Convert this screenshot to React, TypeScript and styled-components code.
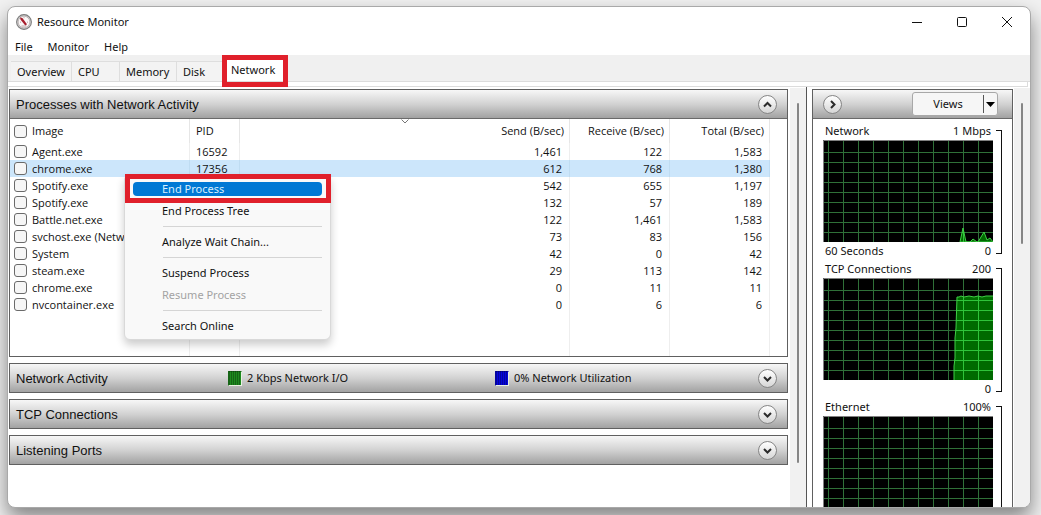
import React from "react";
import styled, { createGlobalStyle, css } from "styled-components";

const GlobalStyle = createGlobalStyle`
  * { box-sizing: border-box; }
  html, body { margin: 0; padding: 0; }
  body {
    background: #f1f1f1;
    color: #111;
    font-family: "Noto Sans", "Open Sans", sans-serif;
    font-size: 11px;
    line-height: 16px;
  }
  button, input { font: inherit; color: inherit; margin: 0; }
  button { padding: 0; border: 0; background: none; }
`;

const Desktop = styled.div`
  height: 100vh;
  min-height: 320px;
  padding: 6px 10px 7px 7px;
  overflow: hidden;
`;

const Window = styled.main`
  display: flex;
  flex-direction: column;
  height: 100%;
  overflow: hidden;
  background: #fff;
  border: 1px solid #a9a9a9;
  border-radius: 8px;
  box-shadow: 0 10px 20px rgba(0, 0, 0, 0.46);
`;

const TitleBar = styled.header`
  display: flex;
  flex: none;
  align-items: center;
  height: 32px;
  padding: 0 17px 2px 8px;
`;

const Title = styled.h1`
  flex: 1;
  margin: 0 0 0 5px;
  font-size: 11px;
  font-weight: 400;
`;

const Caption = styled.div`
  display: flex;
  gap: 33px;
`;

const CaptionButton = styled.button`
  display: flex;
  svg { display: block; }
`;

const MenuBar = styled.nav`
  display: flex;
  flex: none;
  gap: 15px;
  height: 16px;
  padding: 0 7px;
`;

const TabStrip = styled.div`
  display: flex;
  flex: none;
  align-items: flex-end;
  height: 27px;
  padding-left: 3px;
  background: #f0f0f0;
  border-bottom: 1px solid #dcdcdc;
`;

const Tab = styled.button<{ $width: number; $active?: boolean }>`
  position: relative;
  width: ${(p) => p.$width}px;
  height: 20px;
  padding-left: 6px;
  text-align: left;
  background: #f3f3f3;
  border: 1px solid #dedede;
  border-width: 1px 1px 0 0;
  ${(p) =>
    p.$active &&
    css`
      height: 24px;
      padding-left: 8px;
      background: #fff;
      border-color: #fff;
    `}
`;

const Highlight = styled.span<{ $inset: string }>`
  position: absolute;
  inset: ${(p) => p.$inset};
  z-index: 2;
  border: 5px solid #e0202b;
  pointer-events: none;
`;

const PageEdge = styled.div`
  flex: none;
  height: 5px;
  margin-right: 2px;
  border: 1px solid #dcdcdc;
  border-width: 0 1px 1px 0;
`;

const Content = styled.div`
  display: flex;
  flex: 1;
  min-height: 0;
`;

const Sections = styled.div`
  display: flex;
  flex: 1;
  flex-direction: column;
  gap: 6px;
  min-width: 0;
  padding: 2px 2px 0 1px;
`;

const Section = styled.section`
  position: relative;
  flex: none;
  border: 1px solid #606060;
`;

const Bar = styled.div`
  display: flex;
  align-items: center;
  height: 28px;
  padding: 0 10px 0 6px;
  background: linear-gradient(#f7f7f7, #d2d2d2 50%, #a2a2a2);
`;

const SectionTitle = styled.h2`
  flex: 1;
  margin: 0;
  padding-top: 2px;
  font: 400 13px/20px "Liberation Sans", Arial, sans-serif;
`;

const Legend = styled.div`
  display: flex;
  flex: none;
  gap: 8px;
  width: 530px;
`;

const LegendItem = styled.span<{ $width: number; $color: string }>`
  display: flex;
  align-items: center;
  gap: 5px;
  width: ${(p) => p.$width}px;
  &::before {
    content: "";
    width: 12px;
    height: 13px;
    background: linear-gradient(90deg, #0004 1px, transparent 1px) 0 0 / 2px 2px, ${(p) => p.$color};
    border: 1px solid;
    border-color: #0004 #e8f0e0 #e8f0e0 #0004;
  }
`;

const RoundButton = styled.button`
  display: flex;
  align-items: center;
  justify-content: center;
  width: 19px;
  height: 19px;
  border: 1px solid #858585;
  border-radius: 50%;
  background: linear-gradient(#fff, #d6d6d6);
`;

const TableBody = styled.div`
  border-top: 1px solid #6a6a6a;
`;

const Table = styled.table`
  width: 100%;
  font-family: "Open Sans", "Noto Sans", sans-serif;
  table-layout: fixed;
  border-collapse: separate;
  border-spacing: 0;
`;

const HeadCell = styled.th<{ $right?: boolean }>`
  position: relative;
  height: 24px;
  padding: 0 5px 0 6px;
  font-weight: 400;
  text-align: ${(p) => (p.$right ? "right" : "left")};
  border-right: 1px solid #e6e6e6;
  &:last-child { border: 0; }
`;

const SortMark = styled.svg`
  position: absolute;
  top: 0;
  left: 50%;
  transform: translateX(-50%);
`;

const Cell = styled.td<{ $right?: boolean }>`
  height: 17px;
  padding: 0 7px 0 6px;
  text-align: ${(p) => (p.$right ? "right" : "left")};
  border-right: 1px solid #eee;
  white-space: nowrap;
  &:last-child { border: 0; }
`;

const Row = styled.tr<{ $selected?: boolean }>`
  ${Cell}:not(:last-child) {
    background: ${(p) => (p.$selected ? "#cce6fb" : "transparent")};
    border-right-color: ${(p) => (p.$selected ? "#bfdcf2" : "#eee")};
  }
`;

const FillerRow = styled(Row)`
  height: 43px;
`;

const CheckLabel = styled.label`
  display: flex;
  align-items: center;
  gap: 5px;
  margin-left: -2px;
`;

const Check = styled.input.attrs({ type: "checkbox" })`
  appearance: none;
  width: 13px;
  height: 13px;
  border: 1px solid #6a6a6a;
  border-radius: 3px;
  background: #f6f6f6;
`;

const ContextMenu = styled.div`
  position: absolute;
  top: 84px;
  left: 114px;
  z-index: 1;
  width: 207px;
  padding: 3px 8px 2px;
  background: #f9f9f9;
  border: 1px solid #d9d9d9;
  border-radius: 6px;
  box-shadow: 0 5px 8px rgba(0, 0, 0, 0.2);
`;

const MenuItem = styled.button<{ $hot?: boolean }>`
  display: block;
  width: 100%;
  height: 22px;
  padding-left: 29px;
  text-align: left;
  border-radius: 4px;
  &:disabled { color: #a3a3a3; }
  ${(p) =>
    p.$hot &&
    css`
      height: 14px;
      margin: 4px 0;
      line-height: 14px;
      color: #d8f0ff;
      background: #0078d4;
    `}
`;

const Separator = styled.hr`
  height: 1px;
  margin: 4px 0 4px 30px;
  border: 0;
  background: #d5d5d5;
`;

const ScrollTrack = styled.div`
  flex: none;
  width: 16px;
  margin-top: 1px;
  padding: 15px 7px 0;
  background: #f1f1f1;
`;

const ScrollThumb = styled.div<{ $size: number }>`
  width: 2px;
  height: ${(p) => p.$size}%;
  border-radius: 1px;
  background: #858585;
`;

const Sidebar = styled.aside`
  display: flex;
  flex: none;
  width: 224px;
  border-left: 1px solid #555;
`;

const GraphPanel = styled.section`
  display: flex;
  flex: 1;
  flex-direction: column;
  margin: 2px 1px 0 5px;
  border: 1px solid #606060;
  border-bottom: 0;
`;

const GraphBar = styled(Bar)`
  justify-content: space-between;
  padding: 0 14px 0 10px;
`;

const SplitButton = styled.div`
  display: flex;
  width: 86px;
  height: 24px;
  border: 1px solid #a8a8a8;
  border-radius: 3px;
  background: #f6f6f6;
`;

const ViewsButton = styled.button`
  flex: 1;
  margin: 2px 0;
  border-right: 1px solid #555;
`;

const ViewsArrow = styled.button`
  display: flex;
  align-items: center;
  justify-content: center;
  width: 13px;
`;

const Graphs = styled.div`
  flex: 1;
  min-height: 0;
  padding-top: 3px;
  overflow: hidden;
  border-top: 1px solid #6a6a6a;
`;

const GraphBlock = styled.figure`
  display: flex;
  height: 138px;
  margin: 0 10px;
`;

const GraphMain = styled.div`
  flex: none;
  width: 170px;
  svg { display: block; }
`;

const GraphCaption = styled.div`
  display: flex;
  justify-content: space-between;
  padding: 1px 2px;
`;

const Bracket = styled.div`
  width: 6px;
  margin: 8px 0 6px 3px;
  border: 1px solid #111;
  border-left: 0;
`;

function Chevron({ dir }: { dir: "up" | "down" | "right" }) {
  const d = { up: "M2 7.5 5.5 4 9 7.5", down: "M2 4 5.5 7.5 9 4", right: "M4 2 7.5 5.5 4 9" }[dir];
  return (
    <svg width="11" height="11" viewBox="0 0 11 11" aria-hidden="true">
      <path d={d} fill="none" stroke="#2b2b2b" strokeWidth="2" />
    </svg>
  );
}

function AppIcon() {
  return (
    <svg width="16" height="16" viewBox="0 0 16 16" aria-hidden="true">
      <circle cx="8" cy="8" r="7.4" fill="#cfcfcf" stroke="#7d7d7d" strokeWidth="1.1" />
      <circle cx="8" cy="8" r="5.8" fill="#fbf7f7" stroke="#b5aaaa" strokeWidth=".7" />
      <path d="M4 8.2h1M11 8.2h1M8 3.2v1M5.5 12h5" stroke="#b09a9a" strokeWidth=".9" />
      <path d="M4 3.400 6.400 4 11 10.300 9.300 11.500 4.600 5.800Z" fill="#a81e2c" />
    </svg>
  );
}

type GraphProps = {
  title: string;
  max: string;
  min?: string;
  span?: string;
  line?: string;
};

function Graph({ title, max, min, span, line }: GraphProps) {
  const id = title.replace(" ", "");
  const columns = Array.from({ length: 11 }, (_, i) => 5.5 + i * 15);
  const rows = Array.from({ length: 9 }, (_, i) => 12.5 + i * 10);
  const grid = columns.map((x) => `M${x} 0V102`).join("") + rows.map((y) => `M0 ${y}H170`).join("");
  return (
    <GraphBlock>
      <GraphMain>
        <GraphCaption>
          <span>{title}</span>
          <span>{max}</span>
        </GraphCaption>
        <svg width="170" height="102" viewBox="0 0 170 102" role="img" aria-label={title}>
          <rect width="170" height="102" fill="#000" />
          <path d={grid} stroke="#2f7038" />
          {line && (
            <>
              <clipPath id={id}>
                <path d={line} />
              </clipPath>
              <path d={line} fill="#006a00" />
              <path d={grid} stroke="#2fc43a" clipPath={`url(#${id})`} />
              <path d={line} fill="none" stroke="#3fd046" />
            </>
          )}
          <path d="M.5 102V.5H170" fill="none" stroke="#808080" />
        </svg>
        {min && (
          <GraphCaption>
            <span>{span}</span>
            <span>{min}</span>
          </GraphCaption>
        )}
      </GraphMain>
      <Bracket />
    </GraphBlock>
  );
}

const processes = [
  ["Agent.exe", "16592", "1,461", "122", "1,583"],
  ["chrome.exe", "17356", "612", "768", "1,380"],
  ["Spotify.exe", "", "542", "655", "1,197"],
  ["Spotify.exe", "", "132", "57", "189"],
  ["Battle.net.exe", "", "122", "1,461", "1,583"],
  ["svchost.exe (Netw", "", "73", "83", "156"],
  ["System", "", "42", "0", "42"],
  ["steam.exe", "", "29", "113", "142"],
  ["chrome.exe", "", "0", "11", "11"],
  ["nvcontainer.exe", "", "0", "6", "6"],
];

const tabs = [
  { name: "Overview", width: 61 },
  { name: "CPU", width: 48 },
  { name: "Memory", width: 57 },
  { name: "Disk", width: 46 },
  { name: "Network", width: 62, active: true },
];

export default function App() {
  return (
    <Desktop>
      <GlobalStyle />
      <Window>
        <TitleBar>
          <AppIcon />
          <Title>Resource Monitor</Title>
          <Caption>
            <CaptionButton aria-label="Minimize">
              <svg width="12" height="12" viewBox="0 0 12 12">
                <path d="M1 6.5h10" stroke="#111" />
              </svg>
            </CaptionButton>
            <CaptionButton aria-label="Maximize">
              <svg width="12" height="12" viewBox="0 0 12 12">
                <rect x="1.5" y="1.5" width="9" height="9" rx="1" fill="none" stroke="#111" />
              </svg>
            </CaptionButton>
            <CaptionButton aria-label="Close">
              <svg width="12" height="12" viewBox="0 0 12 12">
                <path d="m1 1 10 10M11 1 1 11" stroke="#111" />
              </svg>
            </CaptionButton>
          </Caption>
        </TitleBar>
        <MenuBar>
          <button>File</button>
          <button>Monitor</button>
          <button>Help</button>
        </MenuBar>
        <TabStrip role="tablist">
          {tabs.map((t) => (
            <Tab key={t.name} role="tab" aria-selected={!!t.active} $width={t.width} $active={t.active}>
              {t.name}
              {t.active && <Highlight $inset="-3px -4px -6px -1px" />}
            </Tab>
          ))}
        </TabStrip>
        <PageEdge />
        <Content>
          <Sections>
            <Section>
              <Bar>
                <SectionTitle>Processes with Network Activity</SectionTitle>
                <RoundButton aria-label="Collapse">
                  <Chevron dir="up" />
                </RoundButton>
              </Bar>
              <TableBody>
                <Table>
                  <colgroup>
                    <col style={{ width: 180 }} />
                    <col style={{ width: 50 }} />
                    <col />
                    <col style={{ width: 100 }} />
                    <col style={{ width: 100 }} />
                    <col style={{ width: 17 }} />
                  </colgroup>
                  <thead>
                    <tr>
                      <HeadCell>
                        <CheckLabel>
                          <Check />
                          Image
                        </CheckLabel>
                      </HeadCell>
                      <HeadCell>PID</HeadCell>
                      <HeadCell $right>
                        <SortMark width="9" height="5" viewBox="0 0 9 5" aria-hidden="true">
                          <path d="M1 .5 4.5 4 8 .5" fill="none" stroke="#777" />
                        </SortMark>
                        Send (B/sec)
                      </HeadCell>
                      <HeadCell $right>Receive (B/sec)</HeadCell>
                      <HeadCell $right>Total (B/sec)</HeadCell>
                      <HeadCell />
                    </tr>
                  </thead>
                  <tbody>
                    {processes.map(([image, pid, send, receive, total], i) => (
                      <Row key={i} $selected={i === 1}>
                        <Cell>
                          <CheckLabel>
                            <Check />
                            {image}
                          </CheckLabel>
                        </Cell>
                        <Cell>{pid}</Cell>
                        <Cell $right>{send}</Cell>
                        <Cell $right>{receive}</Cell>
                        <Cell $right>{total}</Cell>
                        <Cell />
                      </Row>
                    ))}
                    <FillerRow aria-hidden="true">
                      <Cell />
                      <Cell />
                      <Cell />
                      <Cell />
                      <Cell />
                      <Cell />
                    </FillerRow>
                  </tbody>
                </Table>
              </TableBody>
              <ContextMenu role="menu">
                <Highlight $inset="-1px -1px 136px 0" />
                <MenuItem role="menuitem" $hot>End Process</MenuItem>
                <MenuItem role="menuitem">End Process Tree</MenuItem>
                <Separator />
                <MenuItem role="menuitem">Analyze Wait Chain...</MenuItem>
                <Separator />
                <MenuItem role="menuitem">Suspend Process</MenuItem>
                <MenuItem role="menuitem" disabled>Resume Process</MenuItem>
                <Separator />
                <MenuItem role="menuitem">Search Online</MenuItem>
              </ContextMenu>
            </Section>
            <Section>
              <Bar>
                <SectionTitle>Network Activity</SectionTitle>
                <Legend>
                  <LegendItem $width={259} $color="#1e8a1e">2 Kbps Network I/O</LegendItem>
                  <LegendItem $width={200} $color="#0505dc">0% Network Utilization</LegendItem>
                </Legend>
                <RoundButton aria-label="Expand Network Activity">
                  <Chevron dir="down" />
                </RoundButton>
              </Bar>
            </Section>
            <Section>
              <Bar>
                <SectionTitle>TCP Connections</SectionTitle>
                <RoundButton aria-label="Expand TCP Connections">
                  <Chevron dir="down" />
                </RoundButton>
              </Bar>
            </Section>
            <Section>
              <Bar>
                <SectionTitle>Listening Ports</SectionTitle>
                <RoundButton aria-label="Expand Listening Ports">
                  <Chevron dir="down" />
                </RoundButton>
              </Bar>
            </Section>
          </Sections>
          <ScrollTrack>
            <ScrollThumb $size={89} />
          </ScrollTrack>
          <Sidebar>
            <GraphPanel>
              <GraphBar>
                <RoundButton aria-label="Hide graphs">
                  <Chevron dir="right" />
                </RoundButton>
                <SplitButton>
                  <ViewsButton>Views</ViewsButton>
                  <ViewsArrow aria-label="View options">
                    <svg width="9" height="5" viewBox="0 0 9 5" aria-hidden="true">
                      <path d="M0 0h9L4.5 5Z" fill="#000" />
                    </svg>
                  </ViewsArrow>
                </SplitButton>
              </GraphBar>
              <Graphs>
                <Graph
                  title="Network"
                  max="1 Mbps"
                  span="60 Seconds"
                  min="0"
                  line="M137 102 140 88 143 102H147L150 99 154 102H155L161 92 164 100 167 98 170 102Z"
                />
                <Graph
                  title="TCP Connections"
                  max="200"
                  min="0"
                  line="M131 103V88L132 80V60L133 50 134 19H136L138 18 141 19 146 18 151 19 155 18 159 19 163 18H171V103Z"
                />
                <Graph title="Ethernet" max="100%" />
              </Graphs>
            </GraphPanel>
            <ScrollTrack>
              <ScrollThumb $size={35} />
            </ScrollTrack>
          </Sidebar>
        </Content>
      </Window>
    </Desktop>
  );
}
